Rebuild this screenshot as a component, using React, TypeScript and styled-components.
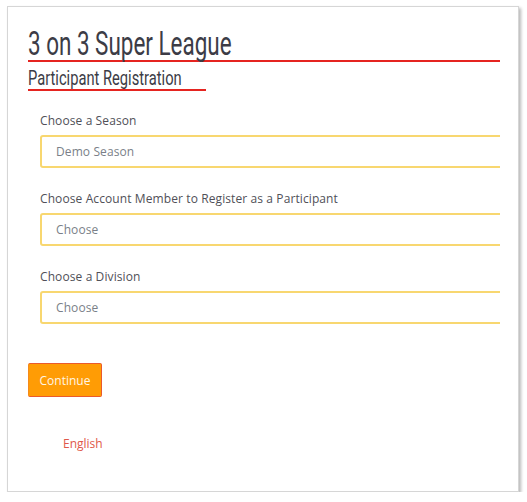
import styled, { createGlobalStyle } from 'styled-components';

const GlobalStyle = createGlobalStyle`
  html, body {
    margin: 0;
    padding: 0;
    background: #ffffff;
  }
  body {
    font-family: "Open Sans", "Liberation Sans", sans-serif;
  }
`;

interface FieldProps {
  label: string;
  value: string;
}

const Field = ({ label, value }: FieldProps) => (
  <FieldGroup>
    <Label>{label}</Label>
    <SelectBox>{value}</SelectBox>
  </FieldGroup>
);

const App = () => {
  return (
    <>
      <GlobalStyle />
      <Card>
        <Content>
          <Title>
            <Narrow $scale={0.66}>3 on 3 Super League</Narrow>
          </Title>
          <Subtitle>
            <Narrow $scale={0.7}>Participant Registration</Narrow>
          </Subtitle>

          <Form>
            <Field label="Choose a Season" value="Demo Season" />
            <Field label="Choose Account Member to Register as a Participant" value="Choose" />
            <Field label="Choose a Division" value="Choose" />
          </Form>

          <ContinueButton>Continue</ContinueButton>

          <LanguageLink>English</LanguageLink>
        </Content>
      </Card>
    </>
  );
};

export default App;

// Styles
const Card = styled.div`
  box-sizing: border-box;
  margin: 6px 0 0 7px;
  width: 512px;
  height: 486px;
  padding: 12px 18px 0 20px;
  background: #ffffff;
  border: 1px solid #d6d6d6;
  box-shadow: 2px 2px 3px rgba(0, 0, 0, 0.28);
`;

// the page is cut off on the right, fields run past the edge
const Content = styled.div`
  overflow: hidden;
  padding: 8px 0 6px;
`;

// condensed headline face is not installed, so squeeze Roboto sideways
const Narrow = styled.span<{ $scale: number }>`
  display: inline-block;
  white-space: nowrap;
  transform: scaleX(${(p) => p.$scale});
  transform-origin: left center;
`;

const Title = styled.h1`
  margin: 0;
  font-family: "Roboto", "Liberation Sans", sans-serif;
  font-weight: 400;
  font-size: 34px;
  line-height: 33px;
  color: #3c3c46;
  border-bottom: 2px solid #e52420;
`;

const Subtitle = styled.h2`
  box-sizing: border-box;
  width: 178px;
  margin: 5px 0 0;
  font-family: "Roboto", "Liberation Sans", sans-serif;
  font-weight: 400;
  font-size: 21px;
  line-height: 22px;
  color: #3c3c46;
  border-bottom: 2px solid #e52420;
`;

const Form = styled.div`
  display: flex;
  flex-direction: column;
  gap: 23px;
  margin-top: 22px;
  padding-left: 12px;
`;

const FieldGroup = styled.div`
  display: flex;
  flex-direction: column;
  gap: 6px;
`;

const Label = styled.div`
  font-size: 12px;
  line-height: 16px;
  letter-spacing: 0.1px;
  color: #505058;
`;

const SelectBox = styled.div`
  box-sizing: border-box;
  width: calc(100% + 24px);
  height: 33px;
  padding: 0 14px;
  display: flex;
  align-items: center;
  font-size: 12px;
  letter-spacing: 0.1px;
  color: #7a7f88;
  border: 2px solid #f8d770;
  border-radius: 3px;
`;

const ContinueButton = styled.button`
  display: block;
  margin-top: 39px;
  width: 74px;
  height: 34px;
  padding: 0;
  font-family: "Open Sans", "Liberation Sans", sans-serif;
  font-size: 12px;
  color: #fff6e6;
  background: #ff9c05;
  border: 1.5px solid #ea5a2c;
  border-left-color: #f58a1a;
  border-radius: 2px;
`;

const LanguageLink = styled.div`
  margin: 39px 0 0 35px;
  font-size: 12px;
  line-height: 16px;
  color: #e0584a;
`;
